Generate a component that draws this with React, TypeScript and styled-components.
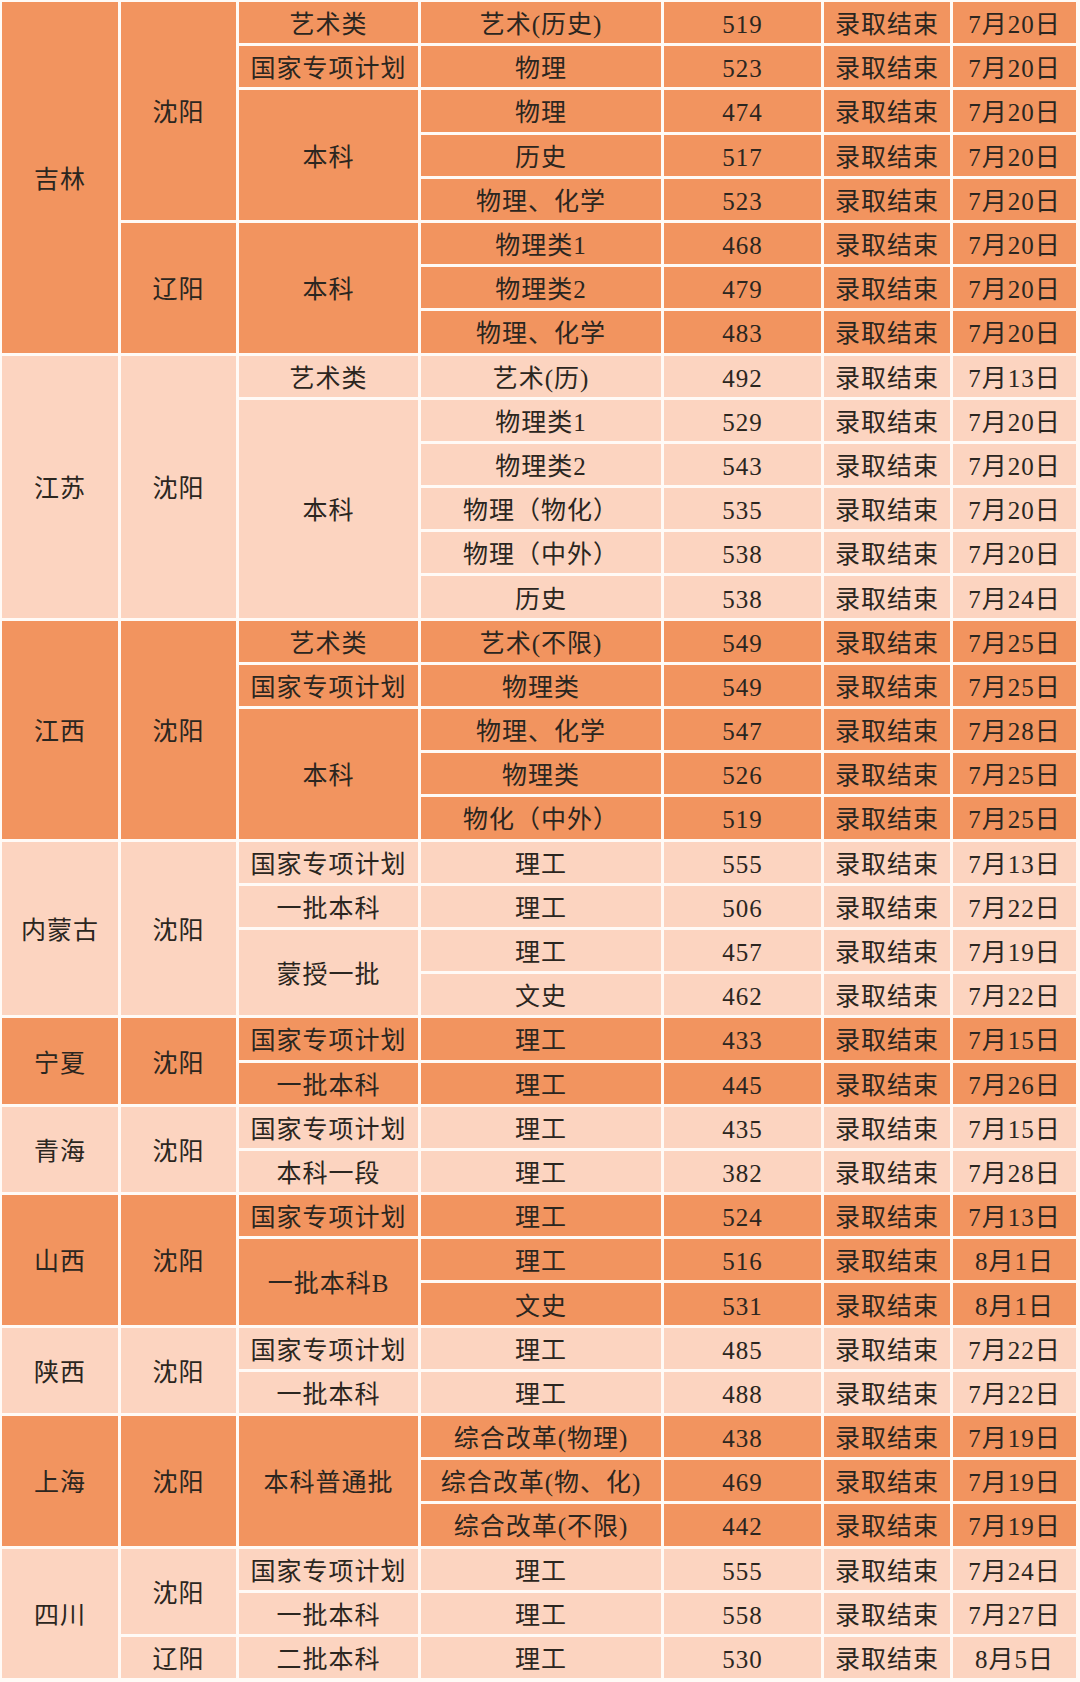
import React from 'react';
import styled, { createGlobalStyle } from 'styled-components';

const GlobalStyle = createGlobalStyle`
  html, body {
    margin: 0;
    padding: 0;
    background: #ffffff;
  }
`;

const DARK = '#f2945f';
const LIGHT = '#fcd4c0';

type Row = [string, string, string, string];
type Batch = { name: string; rows: Row[] };
type City = { name: string; batches: Batch[] };
type Province = { name: string; cities: City[] };

const data: Province[] = [
  {
    name: '吉林',
    cities: [
      {
        name: '沈阳',
        batches: [
          { name: '艺术类', rows: [['艺术(历史)', '519', '录取结束', '7月20日']] },
          { name: '国家专项计划', rows: [['物理', '523', '录取结束', '7月20日']] },
          {
            name: '本科',
            rows: [
              ['物理', '474', '录取结束', '7月20日'],
              ['历史', '517', '录取结束', '7月20日'],
              ['物理、化学', '523', '录取结束', '7月20日'],
            ],
          },
        ],
      },
      {
        name: '辽阳',
        batches: [
          {
            name: '本科',
            rows: [
              ['物理类1', '468', '录取结束', '7月20日'],
              ['物理类2', '479', '录取结束', '7月20日'],
              ['物理、化学', '483', '录取结束', '7月20日'],
            ],
          },
        ],
      },
    ],
  },
  {
    name: '江苏',
    cities: [
      {
        name: '沈阳',
        batches: [
          { name: '艺术类', rows: [['艺术(历)', '492', '录取结束', '7月13日']] },
          {
            name: '本科',
            rows: [
              ['物理类1', '529', '录取结束', '7月20日'],
              ['物理类2', '543', '录取结束', '7月20日'],
              ['物理（物化）', '535', '录取结束', '7月20日'],
              ['物理（中外）', '538', '录取结束', '7月20日'],
              ['历史', '538', '录取结束', '7月24日'],
            ],
          },
        ],
      },
    ],
  },
  {
    name: '江西',
    cities: [
      {
        name: '沈阳',
        batches: [
          { name: '艺术类', rows: [['艺术(不限)', '549', '录取结束', '7月25日']] },
          { name: '国家专项计划', rows: [['物理类', '549', '录取结束', '7月25日']] },
          {
            name: '本科',
            rows: [
              ['物理、化学', '547', '录取结束', '7月28日'],
              ['物理类', '526', '录取结束', '7月25日'],
              ['物化（中外）', '519', '录取结束', '7月25日'],
            ],
          },
        ],
      },
    ],
  },
  {
    name: '内蒙古',
    cities: [
      {
        name: '沈阳',
        batches: [
          { name: '国家专项计划', rows: [['理工', '555', '录取结束', '7月13日']] },
          { name: '一批本科', rows: [['理工', '506', '录取结束', '7月22日']] },
          {
            name: '蒙授一批',
            rows: [
              ['理工', '457', '录取结束', '7月19日'],
              ['文史', '462', '录取结束', '7月22日'],
            ],
          },
        ],
      },
    ],
  },
  {
    name: '宁夏',
    cities: [
      {
        name: '沈阳',
        batches: [
          { name: '国家专项计划', rows: [['理工', '433', '录取结束', '7月15日']] },
          { name: '一批本科', rows: [['理工', '445', '录取结束', '7月26日']] },
        ],
      },
    ],
  },
  {
    name: '青海',
    cities: [
      {
        name: '沈阳',
        batches: [
          { name: '国家专项计划', rows: [['理工', '435', '录取结束', '7月15日']] },
          { name: '本科一段', rows: [['理工', '382', '录取结束', '7月28日']] },
        ],
      },
    ],
  },
  {
    name: '山西',
    cities: [
      {
        name: '沈阳',
        batches: [
          { name: '国家专项计划', rows: [['理工', '524', '录取结束', '7月13日']] },
          {
            name: '一批本科B',
            rows: [
              ['理工', '516', '录取结束', '8月1日'],
              ['文史', '531', '录取结束', '8月1日'],
            ],
          },
        ],
      },
    ],
  },
  {
    name: '陕西',
    cities: [
      {
        name: '沈阳',
        batches: [
          { name: '国家专项计划', rows: [['理工', '485', '录取结束', '7月22日']] },
          { name: '一批本科', rows: [['理工', '488', '录取结束', '7月22日']] },
        ],
      },
    ],
  },
  {
    name: '上海',
    cities: [
      {
        name: '沈阳',
        batches: [
          {
            name: '本科普通批',
            rows: [
              ['综合改革(物理)', '438', '录取结束', '7月19日'],
              ['综合改革(物、化)', '469', '录取结束', '7月19日'],
              ['综合改革(不限)', '442', '录取结束', '7月19日'],
            ],
          },
        ],
      },
    ],
  },
  {
    name: '四川',
    cities: [
      {
        name: '沈阳',
        batches: [
          { name: '国家专项计划', rows: [['理工', '555', '录取结束', '7月24日']] },
          { name: '一批本科', rows: [['理工', '558', '录取结束', '7月27日']] },
        ],
      },
      {
        name: '辽阳',
        batches: [{ name: '二批本科', rows: [['理工', '530', '录取结束', '8月5日']] }],
      },
    ],
  },
];

const Sheet = styled.div`
  display: grid;
  grid-template-columns: 116px 115px 179px 240px 157px 126px 123px;
  grid-auto-rows: 41.2px;
  gap: 3px;
  padding: 2px 4px 4px 2px;
  width: 1080px;
  box-sizing: border-box;
  background: #fffaf6;
  font-family: 'Liberation Serif', 'Noto Sans CJK SC', serif;
  font-size: 25px;
  letter-spacing: 1px;
  color: #2b2620;
`;

const Cell = styled.div<{ $row: number; $span: number; $col: number; $dark: boolean }>`
  grid-column: ${p => p.$col};
  grid-row: ${p => p.$row} / span ${p => p.$span};
  background: ${p => (p.$dark ? DARK : LIGHT)};
  display: flex;
  align-items: center;
  justify-content: center;
  padding-top: 4px;
  box-sizing: border-box;
  white-space: nowrap;
  line-height: 1;
`;

const countRows = (c: City) => c.batches.reduce((n, b) => n + b.rows.length, 0);

export default function App() {
  const cells: React.ReactNode[] = [];
  let row = 1;
  data.forEach((prov, pi) => {
    const dark = pi % 2 === 0;
    const provRows = prov.cities.reduce((n, c) => n + countRows(c), 0);
    cells.push(
      <Cell key={`p${pi}`} $row={row} $span={provRows} $col={1} $dark={dark}>
        {prov.name}
      </Cell>
    );
    let cityRow = row;
    prov.cities.forEach((city, ci) => {
      cells.push(
        <Cell key={`c${pi}-${ci}`} $row={cityRow} $span={countRows(city)} $col={2} $dark={dark}>
          {city.name}
        </Cell>
      );
      let batchRow = cityRow;
      city.batches.forEach((batch, bi) => {
        cells.push(
          <Cell key={`b${pi}-${ci}-${bi}`} $row={batchRow} $span={batch.rows.length} $col={3} $dark={dark}>
            {batch.name}
          </Cell>
        );
        batch.rows.forEach((r, ri) => {
          r.forEach((txt, ti) => {
            cells.push(
              <Cell key={`r${pi}-${ci}-${bi}-${ri}-${ti}`} $row={batchRow + ri} $span={1} $col={4 + ti} $dark={dark}>
                {txt}
              </Cell>
            );
          });
        });
        batchRow += batch.rows.length;
      });
      cityRow += countRows(city);
    });
    row += provRows;
  });

  return (
    <>
      <GlobalStyle />
      <Sheet>{cells}</Sheet>
    </>
  );
}
